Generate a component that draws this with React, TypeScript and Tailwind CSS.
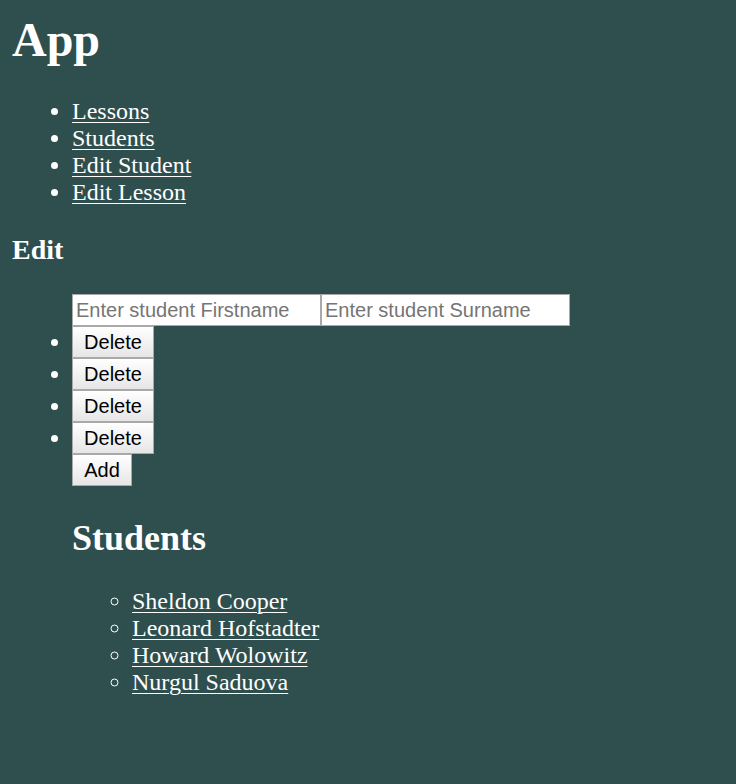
import React from "react";

const serif = "font-['Liberation_Serif',serif]";
const sans = "font-['Liberation_Sans',Arial,sans-serif]";

export default function App() {
  const navLinks = ["Lessons", "Students", "Edit Student", "Edit Lesson"];
  const students = ["Sheldon Cooper", "Leonard Hofstadter", "Howard Wolowitz", "Nurgul Saduova"];
  return (
    <div className={`min-h-[784px] bg-[#2f4f4f] text-white ${serif} px-[12px] pt-[12px] pb-[12px]`}>
      <h1 className="text-[48px] font-bold leading-[55px] mb-[31px]">App</h1>
      <ul className="list-disc pl-[60px] text-[24px] leading-[27px] mb-[27px]">
        {navLinks.map((l) => (
          <li key={l}>
            <a href="#" className="underline underline-offset-[3px] decoration-1">{l}</a>
          </li>
        ))}
      </ul>
      <h3 className="text-[28px] font-bold leading-[33px] mb-[28px]">Edit</h3>
      <ul className="list-disc pl-[60px] text-[24px]">
        <div className="flex h-[32px]">
          <input
            className={`${sans} box-border w-[249px] h-[32px] bg-white border border-[#a9a9a9] px-[3px] text-[20px] text-black placeholder:text-[#757575] outline-none`}
            placeholder="Enter student Firstname"
          />
          <input
            className={`${sans} box-border w-[249px] h-[32px] bg-white border border-[#a9a9a9] px-[3px] text-[20px] text-black placeholder:text-[#757575] outline-none`}
            placeholder="Enter student Surname"
          />
        </div>
        {[0, 1, 2, 3].map((i) => (
          <li key={i} className="h-[32px] leading-[32px]">
            <button
              className={`${sans} align-top box-border w-[82px] h-[32px] border border-[#a9a9a9] bg-gradient-to-b from-[#ffffff] to-[#e6e6e6] text-[20px] leading-[30px] text-black`}
            >
              Delete
            </button>
          </li>
        ))}
        <div className="h-[32px]">
          <button
            className={`${sans} align-top box-border w-[60px] h-[32px] border border-[#a9a9a9] bg-gradient-to-b from-[#ffffff] to-[#e6e6e6] text-[20px] leading-[30px] text-black`}
          >
            Add
          </button>
        </div>
        <h2 className="text-[36px] font-bold leading-[41px] mt-[32px] mb-[29px]">Students</h2>
        <ul className="list-[circle] pl-[60px] text-[24px] leading-[27px]">
          {students.map((s) => (
            <li key={s}>
              <a href="#" className="underline underline-offset-[3px] decoration-1">{s}</a>
            </li>
          ))}
        </ul>
      </ul>
    </div>
  );
}
